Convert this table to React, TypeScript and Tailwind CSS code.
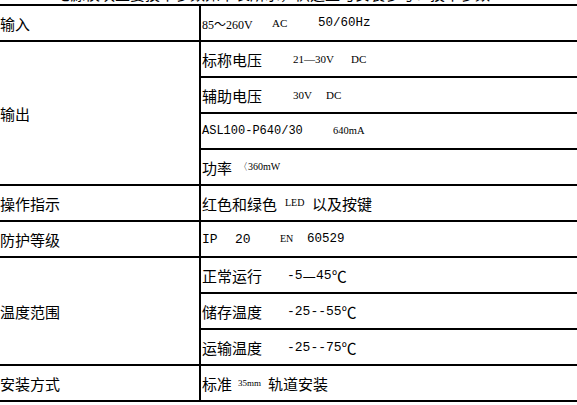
import React from "react";

const cjk = "font-['Noto_Sans_CJK_SC',sans-serif]";
const mono = "font-['Liberation_Mono',monospace]";
const serif = "font-['Liberation_Serif',serif]";

// One cell of the value column; children are laid out left to right.
function Val({ children }: { children: React.ReactNode }) {
  return (
    <div className="col-start-2 flex h-[36px] items-center whitespace-nowrap border-b-2 border-black pl-[1px]">
      {children}
    </div>
  );
}

function Label({ text, span }: { text: string; span?: string }) {
  return (
    <div
      className={`col-start-1 flex items-center border-b-2 border-r-2 border-black text-[15px] ${cjk} ${span ?? ""}`}
    >
      {text}
    </div>
  );
}

export default function App() {
  return (
    <div className={`h-[405px] w-[577px] overflow-hidden bg-white text-black ${cjk}`}>
      {/* tail of the caption above the table, cut by the crop */}
      <div className="flex h-[4px] items-end overflow-hidden whitespace-nowrap pl-[55px]">
        <span className="mb-[3px] text-[15px] leading-[15px]">
          电源模块主要技术参数如下表所示，供选型与安装参考：技术参数
        </span>
      </div>

      <div className="grid grid-cols-[201px_1fr] auto-rows-[36px] border-t-2 border-black text-[15px] leading-none">
        <Label text="输入" />
        <Val>
          <span className="inline-block w-[70px]">
            <span className={`${serif} text-[12px]`}>85</span>
            <span className="text-[12px]">～</span>
            <span className={`${serif} text-[12px]`}>260V</span>
          </span>
          <span className={`inline-block w-[46px] ${serif} text-[11px]`}>AC</span>
          <span className={`${mono} text-[12.5px]`}>50/60Hz</span>
        </Val>

        <Label text="输出" span="row-span-4" />
        <Val>
          <span className="inline-block w-[91px]">标称电压</span>
          <span className={`inline-block w-[58px] ${serif} text-[11px]`}>21—30V</span>
          <span className={`${serif} text-[11px]`}>DC</span>
        </Val>
        <Val>
          <span className="inline-block w-[91px]">辅助电压</span>
          <span className={`inline-block w-[33px] ${serif} text-[11px]`}>30V</span>
          <span className={`${serif} text-[11px]`}>DC</span>
        </Val>
        <Val>
          <span className={`inline-block w-[131px] ${mono} text-[12px]`}>ASL100-P640/30</span>
          <span className={`${serif} text-[10.5px]`}>640mA</span>
        </Val>
        <Val>
          <span className="inline-block w-[36px]">功率</span>
          <span className={`${serif} text-[10px]`}>〈360mW</span>
        </Val>

        <Label text="操作指示" />
        <Val>
          <span className="inline-block w-[83px]">红色和绿色</span>
          <span className={`inline-block w-[27px] ${serif} text-[10px]`}>LED</span>
          <span>以及按键</span>
        </Val>

        <Label text="防护等级" />
        <Val>
          <span className={`inline-block w-[33px] ${mono} text-[13px]`}>IP</span>
          <span className={`inline-block w-[45px] ${mono} text-[13px]`}>20</span>
          <span className={`inline-block w-[27px] ${serif} text-[10px]`}>EN</span>
          <span className={`${mono} text-[12.5px]`}>60529</span>
        </Val>

        <Label text="温度范围" span="row-span-3" />
        <Val>
          <span className="inline-block w-[85px]">正常运行</span>
          <span className={`${mono} text-[13px]`}>-5</span>
          <span>—</span>
          <span className={`${mono} text-[13px]`}>45</span>
          <span>℃</span>
        </Val>
        <Val>
          <span className="inline-block w-[85px]">储存温度</span>
          <span className={`${mono} text-[13px]`}>-25--55</span>
          <span>℃</span>
        </Val>
        <Val>
          <span className="inline-block w-[85px]">运输温度</span>
          <span className={`${mono} text-[13px]`}>-25--75</span>
          <span>℃</span>
        </Val>

        <Label text="安装方式" />
        <Val>
          <span className="inline-block w-[36px]">标准</span>
          <span className={`inline-block w-[30px] ${serif} text-[9px]`}>35mm</span>
          <span>轨道安装</span>
        </Val>
      </div>
    </div>
  );
}
